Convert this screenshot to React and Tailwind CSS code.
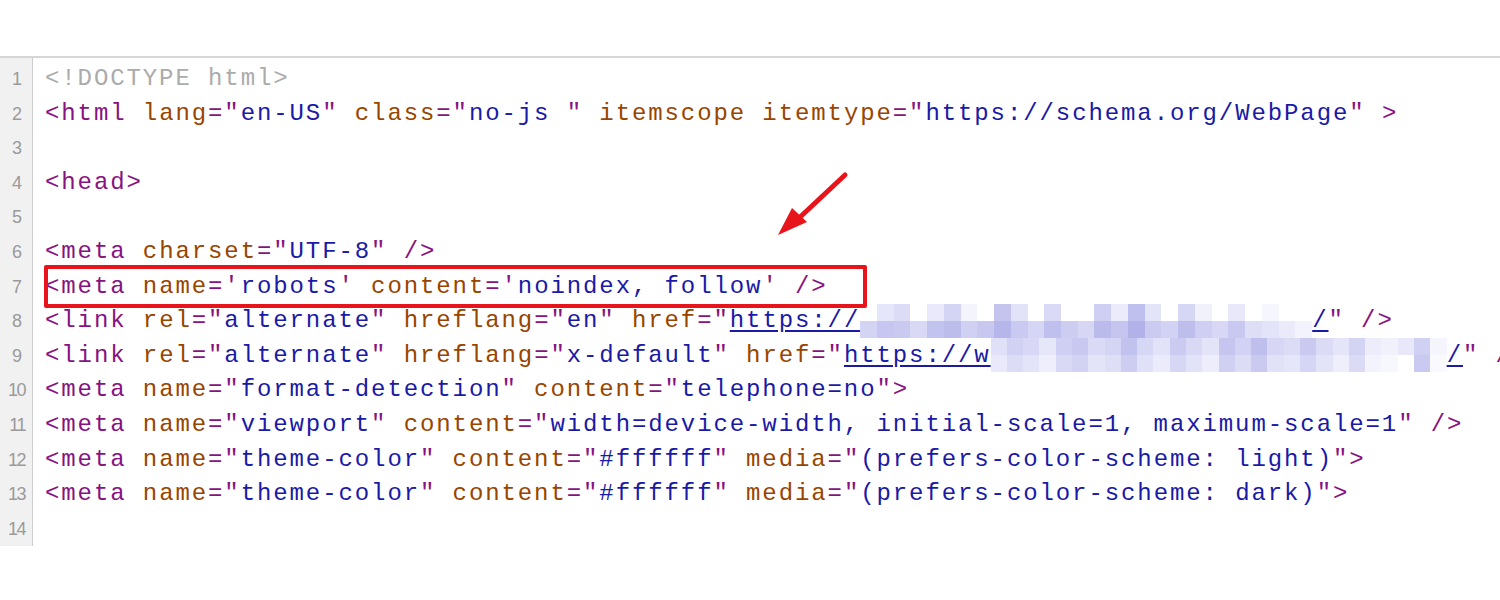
import React from "react";

const C = {
  t: "text-[#881280]",
  a: "text-[#994500]",
  v: "text-[#1a1aa6]",
  d: "text-[#ababab]",
  l: "text-[#1a1aa6] underline underline-offset-[3px]",
};

const blur8 = [
  ["#ffffff","#e6e6fa","#dcdcf7","#ffffff","#e9e9fb","#d4d4f4","#f4f4fd","#ffffff","#c4c4ef","#e2e2f8","#ffffff","#dadaf6","#ffffff","#ffffff","#cfcff3","#ebebfb","#bfc0ee","#e4e4f9","#ffffff","#d6d6f5","#f1f1fc","#ffffff","#e8e8fa","#ffffff","#f6f6fe","#ffffff","#ffffff"],
  ["#d3d3f4","#c6c6f0","#cacaf1","#d9d9f6","#c3c3ef","#bdbdec","#d0d0f3","#c7c7f0","#b6b6ea","#c9c9f1","#d5d5f5","#c0c0ee","#cdcdf2","#d7d7f5","#babaeb","#c5c5f0","#b2b2e9","#cbcbf1","#d2d2f4","#bebeed","#cfcff3","#d8d8f6","#c8c8f0","#dedef7","#e3e3f9","#eaeafb","#f3f3fd"],
];
const blur9 = [
  ["#e0e0f8","#d1d1f3","#d8d8f6","#e7e7fa","#cfcff3","#c8c8f0","#dadaf6","#d4d4f4","#c2c2ee","#d6d6f5","#e2e2f8","#cbcbf1","#d9d9f6","#e4e4f9","#c5c5ef","#d2d2f4","#bfbfed","#d7d7f5","#dcdcf7","#cacaf1","#dbdbf6","#e5e5f9","#d3d3f4","#ececfb","#f1f1fc","#e8e8fa","#d0d0f3","#f5f5fd"],
  ["#e9e9fb","#dcdcf7","#e3e3f9","#eeeefc","#d9d9f6","#d2d2f4","#e4e4f9","#dedef7","#cdcdf2","#e0e0f8","#ebebfb","#d6d6f5","#e2e2f8","#ededfc","#d0d0f3","#dcdcf7","#cacaf1","#e1e1f8","#e6e6fa","#d5d5f5","#e4e4f9","#efeffc","#dbdbf6","#f3f3fd","#f7f7fe","#ffffff","#c9c9f1","#f9f9fe"],
];

function Blur({ rows, width }) {
  return (
    <span
      className="inline-flex flex-col align-middle -my-[4px] overflow-hidden"
      style={{ width }}
    >
      {rows.map((r, i) => (
        <span key={i} className="flex h-[17px]">
          {r.map((c, j) => (
            <span key={j} className="block h-full flex-1" style={{ background: c }} />
          ))}
        </span>
      ))}
    </span>
  );
}

const lines = [
  [["d", "<!DOCTYPE html>"]],
  [["t", "<html "], ["a", "lang"], ["t", "=\""], ["v", "en-US"], ["t", "\" "], ["a", "class"], ["t", "=\""], ["v", "no-js "], ["t", "\" "], ["a", "itemscope itemtype"], ["t", "=\""], ["v", "https://schema.org/WebPage"], ["t", "\" >"]],
  [],
  [["t", "<head>"]],
  [],
  [["t", "<meta "], ["a", "charset"], ["t", "=\""], ["v", "UTF-8"], ["t", "\" />"]],
  [["t", "<meta "], ["a", "name"], ["t", "='"], ["v", "robots"], ["t", "' "], ["a", "content"], ["t", "='"], ["v", "noindex, follow"], ["t", "' />"]],
  [["t", "<link "], ["a", "rel"], ["t", "=\""], ["v", "alternate"], ["t", "\" "], ["a", "hreflang"], ["t", "=\""], ["v", "en"], ["t", "\" "], ["a", "href"], ["t", "=\""], ["l", "https://"], ["b8", ""], ["l", "/"], ["t", "\" />"]],
  [["t", "<link "], ["a", "rel"], ["t", "=\""], ["v", "alternate"], ["t", "\" "], ["a", "hreflang"], ["t", "=\""], ["v", "x-default"], ["t", "\" "], ["a", "href"], ["t", "=\""], ["l", "https://w"], ["b9", ""], ["l", "/"], ["t", "\" />"]],
  [["t", "<meta "], ["a", "name"], ["t", "=\""], ["v", "format-detection"], ["t", "\" "], ["a", "content"], ["t", "=\""], ["v", "telephone=no"], ["t", "\">"]],
  [["t", "<meta "], ["a", "name"], ["t", "=\""], ["v", "viewport"], ["t", "\" "], ["a", "content"], ["t", "=\""], ["v", "width=device-width, initial-scale=1, maximum-scale=1"], ["t", "\" />"]],
  [["t", "<meta "], ["a", "name"], ["t", "=\""], ["v", "theme-color"], ["t", "\" "], ["a", "content"], ["t", "=\""], ["v", "#ffffff"], ["t", "\" "], ["a", "media"], ["t", "=\""], ["v", "(prefers-color-scheme: light)"], ["t", "\">"]],
  [["t", "<meta "], ["a", "name"], ["t", "=\""], ["v", "theme-color"], ["t", "\" "], ["a", "content"], ["t", "=\""], ["v", "#ffffff"], ["t", "\" "], ["a", "media"], ["t", "=\""], ["v", "(prefers-color-scheme: dark)"], ["t", "\">"]],
  [],
];

export default function App() {
  return (
    <div className="w-[1500px] h-[600px] bg-white overflow-hidden">
      <div className="mt-[56px] border-t-2 border-[#d6d6d6] relative flex">
        <div className="w-[33px] shrink-0 bg-[#f1f1f1] border-r border-[#cdcdcd] pt-[4px] pb-[0px] pr-[10px] text-right font-['Liberation_Sans',sans-serif] text-[18px] text-[#9a9a9a] leading-[34.6px]">
          {lines.map((_, i) => (
            <div key={i} className={i >= 9 ? "tracking-[-1.5px] -mr-[3px]" : ""}>{i + 1}</div>
          ))}
        </div>
        <div className="pl-[12px] pt-[4px] font-['Liberation_Mono',monospace] text-[24px] tracking-[1.9px] leading-[34.6px] whitespace-pre">
          {lines.map((ln, i) => (
            <div key={i} className="h-[34.6px]">
              {ln.map(([k, s], j) =>
                k === "b8" ? (
                  <Blur key={j} rows={blur8} width={452} />
                ) : k === "b9" ? (
                  <Blur key={j} rows={blur9} width={456} />
                ) : (
                  <span key={j} className={C[k]}>{s}</span>
                )
              )}
            </div>
          ))}
        </div>

        {/* red highlight box */}
        <div className="absolute left-[44px] top-[207px] w-[823px] h-[43px] border-[4px] border-[#e8141b] rounded-[2px]" />

        {/* red arrow */}
        <svg className="absolute left-[770px] top-[108px]" width="90" height="80" viewBox="0 0 90 80">
          <line x1="75" y1="9" x2="28" y2="53" stroke="#e8141b" strokeWidth="5" strokeLinecap="round" />
          <polygon points="8,69 22,42 37,56" fill="#e8141b" />
        </svg>
      </div>
    </div>
  );
}
